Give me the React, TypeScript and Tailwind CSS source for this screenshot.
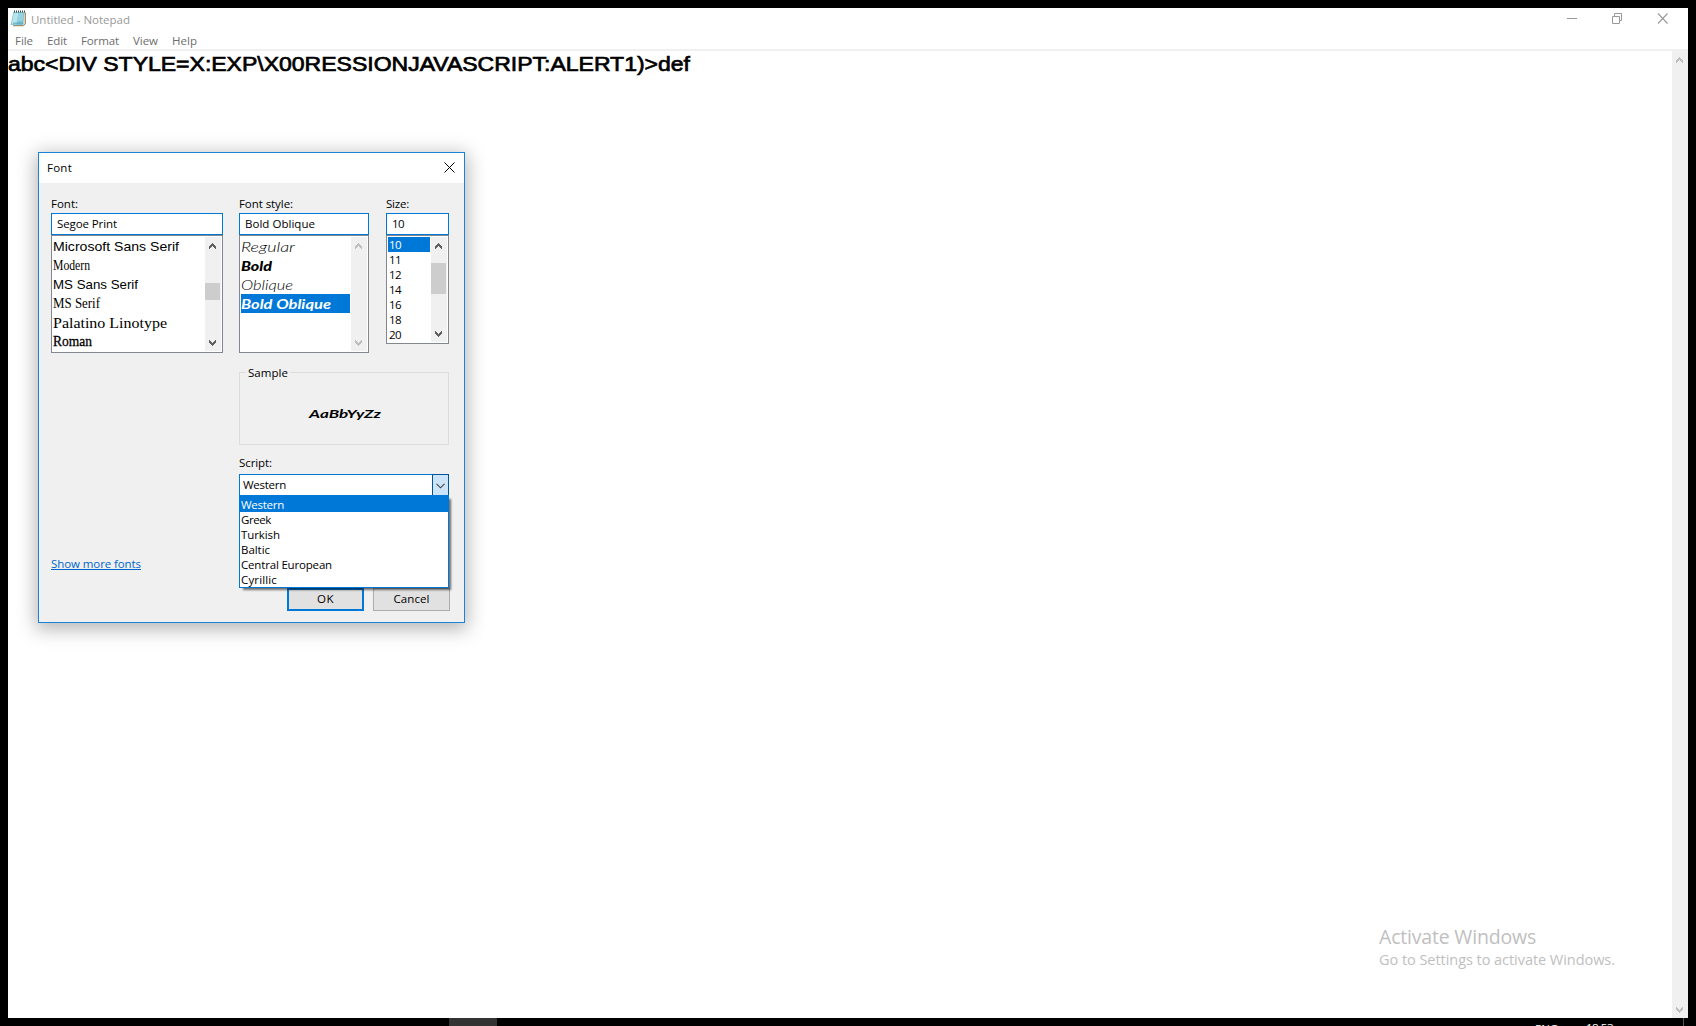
import { useLayoutEffect, useRef } from "react";

/**
 * Text that takes exactly `w` pixels: by tracking, or by widening the glyphs
 * themselves when `stretch` is set.
 */
function Fit({
  w,
  className = "",
  stretch,
  children,
}: {
  w: number;
  className?: string;
  stretch?: boolean;
  children: string;
}) {
  const ref = useRef<HTMLSpanElement>(null);
  useLayoutEffect(() => {
    const el = ref.current;
    if (!el) return;
    el.style.letterSpacing = "0px";
    el.style.transform = "none";
    el.style.marginRight = "0px";
    const natural = el.getBoundingClientRect().width;
    if (stretch) {
      el.style.transform = `scaleX(${w / natural})`;
      el.style.marginRight = `${w - natural}px`;
    } else {
      el.style.letterSpacing = `${(w - natural) / children.length}px`;
    }
  }, [w, stretch, children]);
  return (
    <span ref={ref} className={`inline-block shrink-0 origin-left whitespace-pre ${className}`}>
      {children}
    </span>
  );
}

function Chevron({ dir, className = "" }: { dir: "up" | "down"; className?: string }) {
  return (
    <svg width="8" height="6" viewBox="0 0 8 6" className={className} fill="currentColor" shapeRendering="crispEdges">
      {dir === "up" ? (
        <path d="M3 0h1v1h1v1h1v1h1v3h-1v-1h-1v-1h-1v-1h-1v1h-1v1h-1v1h-1v-3h1v-1h1v-1h1z" />
      ) : (
        <path d="M3 6h1v-1h1v-1h1v-1h1v-3h-1v1h-1v1h-1v1h-1v-1h-1v-1h-1v-1h-1v3h1v1h1v1h1z" />
      )}
    </svg>
  );
}

function Scroll({ disabled, thumb }: { disabled?: boolean; thumb?: string }) {
  return (
    <div
      className={`flex w-4 shrink-0 flex-col items-center justify-between bg-[#f0f0f0] pt-[6px] pb-[5px] ${
        disabled ? "text-[#bfbfbf]" : "text-[#606060]"
      }`}
    >
      <Chevron dir="up" />
      {thumb && <div className={`w-[15px] self-start bg-[#cdcdcd] ${thumb}`} />}
      <Chevron dir="down" />
    </div>
  );
}

function Field({ label, lw, value, vw }: { label: string; lw: number; value: string; vw: number }) {
  return (
    <>
      <div className="h-[17px]">
        <Fit w={lw}>{label}</Fit>
      </div>
      <div className="h-[22px] border border-[#0078d7] bg-white pt-[2px] pl-[5px]">
        <Fit w={vw}>{value}</Fit>
      </div>
    </>
  );
}

function NotepadIcon() {
  return (
    <svg width="16" height="17" viewBox="0 0 16 17">
      <path d="M3 15.7h10.5l1.8-1.8V2.8h-1" fill="#efe9d8" stroke="#8b7b55" strokeWidth="1" />
      <path d="M3.4 2h10.8l-.9 13H.6z" fill="#7cc4d4" />
      <path d="M3.8 3h4.7L6.4 14.2H1.5z" fill="#b9e4ec" />
      <path d="M8.5 3h4.8l-.8 7.5-5.4 1z" fill="#96d2df" />
      <path d="M3 13.2h10.2" stroke="#5ba9bd" strokeWidth="1" />
      <path d="M4 1.5h11" stroke="#3c4a4e" strokeWidth="2" strokeDasharray="1 1" />
    </svg>
  );
}

const fonts = [
  { t: "Microsoft Sans Serif", w: 126, c: "font-['Liberation_Sans'] text-[13.5px] leading-[20px]" },
  { t: "Modern", w: 37, c: "font-['Liberation_Serif'] text-[15px] leading-[18px]" },
  { t: "MS Sans Serif", w: 85, c: "font-['Liberation_Sans'] text-[13px] leading-[20px]" },
  { t: "MS Serif", w: 47, c: "font-['Liberation_Serif'] text-[15px] leading-[18px]" },
  { t: "Palatino Linotype", w: 114, c: "font-['Liberation_Serif'] text-[14.5px] leading-[20px]" },
  { t: "Roman", w: 39, c: "font-['Liberation_Serif'] text-[15px] leading-[18px] [-webkit-text-stroke:0.3px_black]" },
];

const styles = [
  { t: "Regular", w: 54, c: "font-light" },
  { t: "Bold", w: 31, c: "font-black" },
  { t: "Oblique", w: 52, c: "font-light" },
  { t: "Bold Oblique", w: 90, c: "font-bold" },
];

const scripts = [
  { t: "Western", w: 43 },
  { t: "Greek", w: 30 },
  { t: "Turkish", w: 39 },
  { t: "Baltic", w: 29 },
  { t: "Central European", w: 91 },
  { t: "Cyrillic", w: 36 },
];

const menus = [
  { t: "File", w: 18, c: "w-8" },
  { t: "Edit", w: 20, c: "w-[34px]" },
  { t: "Format", w: 38, c: "w-[52px]" },
  { t: "View", w: 25, c: "w-[39px]" },
  { t: "Help", w: 25, c: "w-[39px]" },
];

function FontDialog() {
  return (
    <div className="absolute top-[144px] left-[30px] flex h-[471px] w-[427px] flex-col border border-[#1883d7] bg-[#f0f0f0] text-[11.5px] leading-[15px] text-black shadow-[0_4px_18px_2px_rgba(0,0,0,0.3)]">
      <div className="flex h-[30px] justify-between bg-white pt-[7px] pr-[9px] pl-2">
        <Fit w={25}>Font</Fit>
        <svg width="11" height="11" viewBox="0 0 11 11" className="mt-[2px]" stroke="#000" strokeWidth="1">
          <path d="M.5.5l10 10M10.5.5l-10 10" />
        </svg>
      </div>

      <div className="flex flex-1 pt-[13px] pl-3">
        <div className="flex w-[188px] flex-col">
          <div className="w-[172px]">
            <Field label="Font:" lw={27} value="Segoe Print" vw={60} />
            <div className="flex h-[118px] justify-between border border-[#828790] bg-white p-px">
              <div className="flex flex-col">
                {fonts.map((f) => (
                  <div key={f.t} className={`h-[19px] ${f.c}`}>
                    <Fit w={f.w} stretch>
                      {f.t}
                    </Fit>
                  </div>
                ))}
              </div>
              <Scroll thumb="mt-[20px] mb-auto h-[17px] translate-y-[14px]" />
            </div>
          </div>
          <a className="mt-[203px] h-[15px] text-[#0066cc]">
            <Fit w={90} className="h-[14px] border-b border-[#0066cc]">
              Show more fonts
            </Fit>
          </a>
        </div>

        <div className="flex w-[211px] flex-col">
          <div className="flex justify-between pr-px">
            <div className="w-[130px]">
              <Field label="Font style:" lw={54} value="Bold Oblique" vw={70} />
              <div className="flex h-[118px] border border-[#828790] bg-white p-px">
                <div className="flex flex-1 flex-col pr-px">
                  {styles.map((s) => (
                    <div
                      key={s.t}
                      className={`h-[19px] font-['Lato'] text-[14px] leading-[20px] italic ${s.c} ${
                        s.t === "Bold Oblique" ? "bg-[#0078d7] text-white" : ""
                      }`}
                    >
                      <Fit w={s.w} stretch>
                        {s.t}
                      </Fit>
                    </div>
                  ))}
                </div>
                <Scroll disabled />
              </div>
            </div>
            <div className="w-[63px]">
              <Field label="Size:" lw={23} value="10" vw={12} />
              <div className="flex h-[109px] border border-[#828790] bg-white p-px">
                <div className="mr-px flex flex-1 flex-col">
                  {["10", "11", "12", "14", "16", "18", "20"].map((n) => (
                    <div key={n} className={`h-[15px] pl-px ${n === "10" ? "bg-[#0078d7] text-white" : ""}`}>
                      <Fit w={12}>{n}</Fit>
                    </div>
                  ))}
                </div>
                <Scroll thumb="mb-auto h-[31px] translate-y-[14px]" />
              </div>
            </div>
          </div>

          <fieldset className="mt-[12px] mr-px flex h-[80px] flex-col border border-[#dcdcdc]">
            <legend className="ml-[6px] h-[15px] px-[2px]">
              <Fit w={40}>Sample</Fit>
            </legend>
            <div className="flex justify-center pt-[25px] pl-[2px] font-['Lato'] text-[12px] leading-[18px] font-bold italic">
              <Fit w={72} stretch>
                AaBbYyZz
              </Fit>
            </div>
          </fieldset>

          <div className="mt-[10px] h-[19px]">
            <Fit w={33}>Script:</Fit>
          </div>
          <div className="relative mr-px flex h-[22px] justify-between border border-[#0078d7] bg-white">
            <Fit w={43} className="mt-[2px] ml-[3px]">
              Western
            </Fit>
            <div className="-m-px flex w-[17px] items-center justify-center border border-[#005499] bg-[#cce4f7]">
              <svg width="9" height="6" viewBox="0 0 9 6" className="mt-px" fill="none" stroke="#444" strokeWidth="1.1">
                <path d="M.5.8l4 4 4-4" />
              </svg>
            </div>
            <div className="absolute -right-px -left-px top-[20px] z-10 flex h-[93px] flex-col border border-[#0078d7] bg-white shadow-[3px_3px_2px_-1px_rgba(0,0,0,0.55)]">
              {scripts.map((s) => (
                <div
                  key={s.t}
                  className={`pl-px ${s.t === "Western" ? "h-4 bg-[#0078d7] pt-px text-white" : "h-[15px]"}`}
                >
                  <Fit w={s.w}>{s.t}</Fit>
                </div>
              ))}
            </div>
          </div>

          <div className="mt-[92px] flex justify-end gap-[9px]">
            <button className="flex h-[23px] w-[77px] justify-center border-2 border-[#0078d7] bg-[#e1e1e1] pt-px">
              <Fit w={17}>OK</Fit>
            </button>
            <button className="flex h-[23px] w-[77px] justify-center border border-[#adadad] bg-[#e1e1e1] pt-[2px]">
              <Fit w={36}>Cancel</Fit>
            </button>
          </div>
        </div>
      </div>
    </div>
  );
}

export default function App() {
  return (
    <div className="flex h-[1026px] w-[1696px] flex-col overflow-hidden bg-black px-2 pt-2 font-['Open_Sans',sans-serif]">
      <div className="relative flex h-[1010px] shrink-0 flex-col bg-white">
        <div className="flex h-[22px] justify-between pr-5 pl-[2px] text-[11.5px] leading-[15px] text-[#999]">
          <div className="flex">
            <div className="mt-[2px]">
              <NotepadIcon />
            </div>
            <Fit w={99} className="mt-1 ml-[5px]">
              Untitled - Notepad
            </Fit>
          </div>
          <svg width="102" height="11" viewBox="0 0 102 11" className="mt-[5px]" fill="none" stroke="#999">
            <path d="M1 5.5h10M46.5 3.5h7v7h-7zM48.5 3V.5h7v7H54" />
            <path d="M92 .5l9.5 10M101.5.5l-9.5 10" strokeWidth="1.1" />
          </svg>
        </div>
        <div className="flex h-[19px] pt-[3px] pl-[7px] text-[11.5px] leading-[15px] text-[#6d6d6d]">
          {menus.map((m) => (
            <div key={m.t} className={m.c}>
              <Fit w={m.w}>{m.t}</Fit>
            </div>
          ))}
        </div>
        <div className="flex flex-1 border-t-2 border-[#f0f0f0]">
          <div className="flex-1 font-['Liberation_Sans'] text-[21px] leading-[26px] text-black [-webkit-text-stroke:0.7px_black]">
            <Fit w={682} stretch>
              {"abc<DIV STYLE=X:EXP\\X00RESSIONJAVASCRIPT:ALERT1)>def"}
            </Fit>
          </div>
          <Scroll disabled />
        </div>
        <div className="absolute top-[915px] left-[1371px] flex flex-col items-start text-[#c0c0c0]">
          <Fit w={157} className="text-[19.5px] leading-[28px]">
            Activate Windows
          </Fit>
          <Fit w={236} className="-mt-px text-[14.5px] leading-[20px]">
            Go to Settings to activate Windows.
          </Fit>
        </div>
        <FontDialog />
      </div>
      <div className="flex h-2 shrink-0 overflow-hidden text-[11.5px] leading-[15px] text-white">
        <div className="ml-[441px] w-12 bg-[#333]" />
        <Fit w={23} className="mt-[3px] ml-[1038px]">
          ENG
        </Fit>
        <Fit w={27} className="mt-[2px] ml-[28px]">
          18:53
        </Fit>
        <div className="ml-[70px] w-px bg-[#555]" />
      </div>
    </div>
  );
}
